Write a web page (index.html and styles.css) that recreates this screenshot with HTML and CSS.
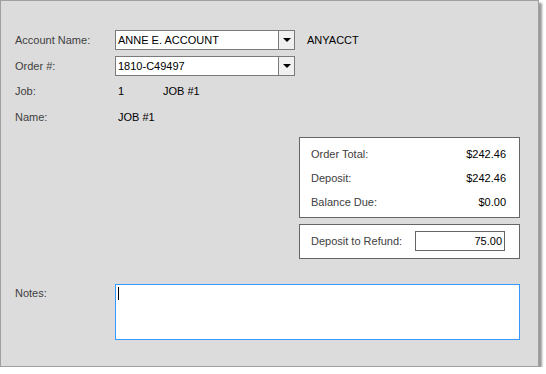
FILE: index.html
```html
<!DOCTYPE html>
<html lang="en">
<head>
    <meta charset="UTF-8">
    <title>Refund Deposit</title>
    <link rel="stylesheet" href="styles.css">
</head>
<body>

<!-- 外框面板 -->
<div class="panel">

    <div class="row">
        <span class="label">Account Name:</span>
        <div class="combo">
            <span class="combo-text">ANNE E. ACCOUNT</span>
            <span class="combo-btn"><span class="arrow"></span></span>
        </div>
        <span class="value acct-code">ANYACCT</span>
    </div>

    <div class="row row-order">
        <span class="label">Order #:</span>
        <div class="combo">
            <span class="combo-text">1810-C49497</span>
            <span class="combo-btn"><span class="arrow"></span></span>
        </div>
    </div>

    <div class="row row-job">
        <span class="label">Job:</span>
        <span class="value job-num">1</span>
        <span class="value">JOB #1</span>
    </div>

    <div class="row row-name">
        <span class="label">Name:</span>
        <span class="value">JOB #1</span>
    </div>

    <!-- 金额汇总 -->
    <div class="totals">
        <div class="total-row"><span class="label">Order Total:</span><span class="value">$242.46</span></div>
        <div class="total-row"><span class="label">Deposit:</span><span class="value">$242.46</span></div>
        <div class="total-row"><span class="label">Balance Due:</span><span class="value">$0.00</span></div>
    </div>

    <div class="refund">
        <span class="label">Deposit to Refund:</span>
        <div class="refund-input">75.00</div>
    </div>

    <!-- 备注 -->
    <div class="row row-notes">
        <span class="label notes-label">Notes:</span>
        <div class="notes"><span class="caret"></span></div>
    </div>

</div>

</body>
</html>
```

FILE: styles.css
```css
* {
    box-sizing: border-box;
}

body {
    margin: 0;
    background: #ffffff;
    font-family: "Liberation Sans", Arial, sans-serif;
    font-size: 11px;
}

/* 面板 */
.panel {
    width: 539px;
    height: 367px;
    border: 1px solid #a0a0a0;
    background: #dcdcdc;
    box-shadow: 3px 3px 2px #999999;
    padding-top: 29px;
}

.row {
    display: flex;
    align-items: center;
    height: 20px;
    padding-left: 14px;
}

.row-order { margin-top: 6px; }
.row-job { margin-top: 5px; }
.row-name { margin-top: 6px; }

.label {
    color: #404040;
    width: 100px;
    flex: none;
}

.value {
    color: #000;
}

.acct-code { margin-left: 12px; }

.job-num {
    width: 48px;
    padding-left: 3px;
}

.row-name .value { padding-left: 3px; }

/* 下拉框 */
.combo {
    display: flex;
    width: 180px;
    height: 20px;
    border: 1px solid #7a7a7a;
    background: #fff;
}

.combo-text {
    flex: 1;
    line-height: 18px;
    padding-left: 2px;
    color: #000;
}

.combo-btn {
    width: 16px;
    border-left: 1px solid #7a7a7a;
    background: #f0f0f0;
    display: flex;
    align-items: center;
    justify-content: center;
}

.arrow {
    width: 0;
    height: 0;
    border-left: 4px solid transparent;
    border-right: 4px solid transparent;
    border-top: 4px solid #000;
}

/* 汇总框 */
.totals {
    margin: 10px 0 0 298px;
    width: 221px;
    border: 1px solid #666;
    background: #fff;
    padding: 6px 13px 5px 11px;
    display: flex;
    flex-direction: column;
    gap: 4px;
}

.total-row {
    display: flex;
    justify-content: space-between;
    align-items: center;
    height: 20px;
}

.refund {
    margin: 6px 0 0 298px;
    width: 221px;
    border: 1px solid #666;
    background: #fff;
    padding: 6px 14px 7px 11px;
    display: flex;
    align-items: center;
    justify-content: space-between;
}

.refund .label { width: auto; }

.refund-input {
    width: 90px;
    height: 20px;
    line-height: 18px;
    border: 1px solid #666;
    text-align: right;
    padding-right: 2px;
    color: #000;
}

/* 备注 */
.row-notes {
    margin-top: 25px;
    height: 56px;
    align-items: flex-start;
}

.notes-label { margin-top: 3px; }

.notes {
    width: 405px;
    height: 56px;
    border: 1px solid #3399ff;
    background: #fff;
}

.caret {
    display: block;
    width: 1px;
    height: 13px;
    background: #000;
    margin: 2px 0 0 2px;
}
```
